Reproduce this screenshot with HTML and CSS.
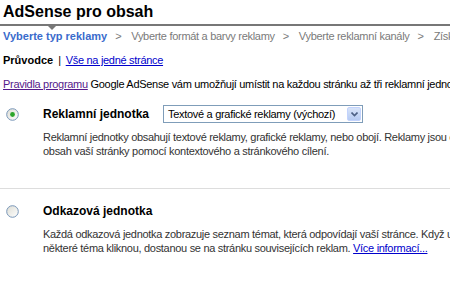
FILE: index.html
```html
<!DOCTYPE html>
<html lang="cs">
<head>
    <meta charset="UTF-8">
    <title>AdSense pro obsah</title>
    <link rel="stylesheet" href="styles.css">
</head>
<body>

    <h1 class="page-title">AdSense pro obsah</h1>
    <div class="title-rule"><span class="pointer"></span></div>

    <div class="steps">
        <span class="step current">Vyberte typ reklamy</span><span class="sep">&gt;</span><span class="step">Vyberte formát a barvy reklamy</span><span class="sep">&gt;</span><span class="step">Vyberte reklamní kanály</span><span class="sep">&gt;</span><span class="step">Získejte kód reklamy</span>
    </div>

    <div class="modes">
        <b>Průvodce</b><span class="bar">|</span><a href="#">Vše na jedné stránce</a>
    </div>

    <p class="intro"><a href="#" class="visited">Pravidla programu</a> Google AdSense vám umožňují umístit na každou stránku až tři reklamní jednotky a tři bloky odkazů.</p>

    <div class="option">
        <div class="option-head">
            <svg class="radio" width="13" height="13" viewBox="0 0 13 13">
                <defs>
                    <linearGradient id="rg1" x1="0" y1="0" x2="1" y2="1">
                        <stop offset="0" stop-color="#dcdcd4"/>
                        <stop offset="1" stop-color="#ffffff"/>
                    </linearGradient>
                </defs>
                <circle cx="6.5" cy="6.5" r="5.8" fill="url(#rg1)" stroke="#7896b8" stroke-width="1"/>
                <circle cx="6.5" cy="6.5" r="2.4" fill="#2ba52b"/>
            </svg>
            <span class="option-name">Reklamní jednotka</span>
            <div class="select">
                <span class="select-text">Textové a grafické reklamy (výchozí)</span>
                <span class="select-btn">
                    <svg width="7" height="5" viewBox="0 0 7 5"><path d="M0.5 0.5 L3.5 3.5 L6.5 0.5" fill="none" stroke="#4d6185" stroke-width="1.6"/></svg>
                </span>
            </div>
        </div>
        <p class="option-desc">Reklamní jednotky obsahují textové reklamy, grafické reklamy, nebo obojí. Reklamy jsou cíleny na<br>obsah vaší stránky pomocí kontextového a stránkového cílení.</p>
    </div>

    <div class="divider"></div>

    <div class="option second">
        <div class="option-head">
            <svg class="radio" width="13" height="13" viewBox="0 0 13 13">
                <defs>
                    <linearGradient id="rg2" x1="0" y1="0" x2="1" y2="1">
                        <stop offset="0" stop-color="#dcdcd4"/>
                        <stop offset="1" stop-color="#ffffff"/>
                    </linearGradient>
                </defs>
                <circle cx="6.5" cy="6.5" r="5.8" fill="url(#rg2)" stroke="#7896b8" stroke-width="1"/>
            </svg>
            <span class="option-name">Odkazová jednotka</span>
        </div>
        <p class="option-desc">Každá odkazová jednotka zobrazuje seznam témat, která odpovídají vaší stránce. Když uživatelé na<br>některé téma kliknou, dostanou se na stránku souvisejících reklam. <a href="#">Více informací...</a></p>
    </div>

</body>
</html>
```

FILE: styles.css
```css
body {
    font-family: 'Liberation Sans', Arial, sans-serif;
    font-size: 11px;
    letter-spacing: -0.3px;
    color: #000;
    background: #fff;
    margin: 0;
    padding: 0;
    overflow: hidden;
    white-space: nowrap;
}
b, .step.current, .option-name, .page-title {
    letter-spacing: 0;
}
a {
    color: #0000cc;
}
a.visited {
    color: #551a8b;
}
.page-title {
    font-size: 16px;
    font-weight: bold;
    line-height: 20px;
    margin: 0;
    padding: 2px 0 0 3px;
    height: 22px;
}
.title-rule {
    position: relative;
    border-top: 2px solid #777;
}
.pointer {
    position: absolute;
    left: 48px;
    top: 0;
    border-left: 4px solid transparent;
    border-right: 4px solid transparent;
    border-top: 4px solid #777;
}
.steps {
    margin-top: 3px;
    padding-left: 3px;
    line-height: 14px;
    color: #7a7a7a;
}
.step.current {
    color: #3a6bcc;
    font-weight: bold;
}
.sep {
    margin: 0 10px 0 8px;
}
.modes {
    margin-top: 10px;
    padding-left: 3px;
    line-height: 14px;
}
.bar {
    margin: 0 5px;
}
.intro {
    margin: 10px 0 0;
    padding-left: 3px;
    line-height: 14px;
}
.option {
    margin-top: 14px;
}
.option.second {
    margin-top: 13px;
}
.option-head {
    display: flex;
    align-items: center;
    height: 18px;
}
.radio {
    margin-left: 6px;
}
.option-name {
    font-size: 12px;
    font-weight: bold;
    margin-left: 24px;
    width: 120px;
}
.select {
    display: flex;
    align-items: center;
    width: 194px;
    height: 16px;
    border: 1px solid #7f9db9;
    background: #fff;
    padding-left: 4px;
    font-size: 11px;
}
.select-text {
    flex: 1;
}
.select-btn {
    display: flex;
    align-items: center;
    justify-content: center;
    width: 14px;
    height: 14px;
    margin-right: 1px;
    background: linear-gradient(#d8e4f9, #b6cbf3);
    border: 1px solid #c3d3fd;
    border-radius: 2px;
    box-sizing: border-box;
}
.option-desc {
    margin: 7px 0 0 43px;
    line-height: 14px;
    color: #333;
}
.divider {
    margin-top: 30px;
    border-top: 1px solid #ddd;
}
```
